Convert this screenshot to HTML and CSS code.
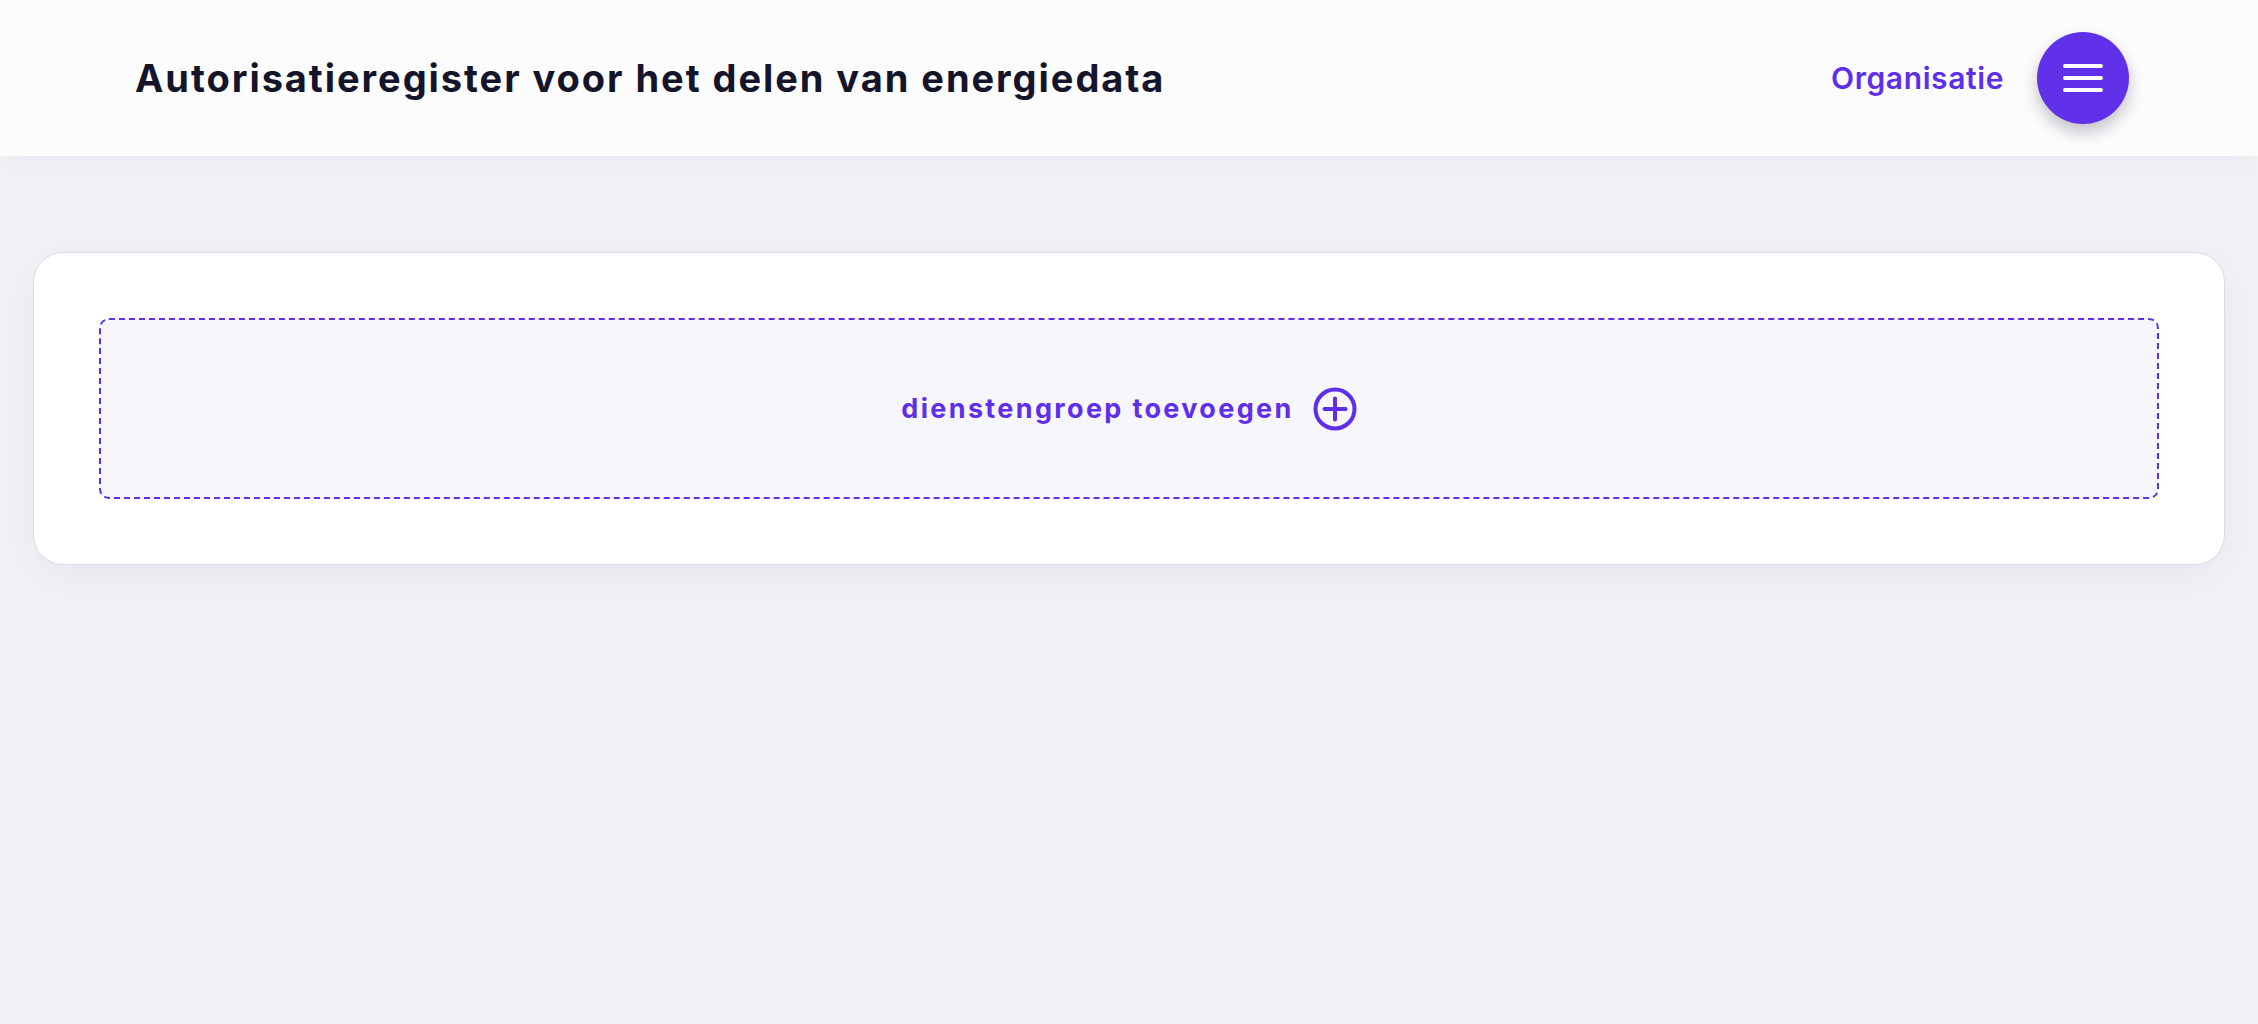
FILE: index.html
```html
<!DOCTYPE html>
<html lang="nl">
<head>
<meta charset="utf-8">
<title>Autorisatieregister</title>
<link rel="stylesheet" href="styles.css">
</head>
<body>
<header class="topbar">
  <h1 class="title">Autorisatieregister voor het delen van energiedata</h1>
  <nav class="nav">
    <a class="nav-link" href="#">Organisatie</a>
    <button class="menu-btn" type="button" aria-label="Menu">
      <span class="menu-line"></span>
      <span class="menu-line"></span>
      <span class="menu-line"></span>
    </button>
  </nav>
</header>
<main class="content">
  <section class="card">
    <button class="add-group" type="button">
      <span class="add-label">dienstengroep toevoegen</span>
      <svg class="add-icon" width="44" height="44" viewBox="0 0 44 44" aria-hidden="true">
        <circle cx="22" cy="22" r="19.5" fill="none" stroke="#5F2EEA" stroke-width="4"/>
        <path d="M22 11.5v21M11.5 22h21" stroke="#5F2EEA" stroke-width="4" stroke-linecap="round"/>
      </svg>
    </button>
  </section>
</main>
</body>
</html>
```
FILE: styles.css
```css
* { box-sizing: border-box; }
html, body { margin: 0; padding: 0; }
body {
  background: #F1F1F6;
  font-family: Inter, "Noto Sans", sans-serif;
  min-height: 1024px;
}
.topbar {
  height: 156px;
  background: #FCFCFD;
  display: flex;
  align-items: center;
  justify-content: space-between;
  padding: 0 129px 0 135px;
  box-shadow: 0 6px 30px rgba(20, 20, 43, 0.04);
  position: relative;
}
.title {
  margin: 0;
  font-size: 38px;
  font-weight: 700;
  color: #14142B;
  letter-spacing: 1.95px;
}
.nav {
  display: flex;
  align-items: center;
  gap: 33px;
}
.nav-link {
  color: #5F2EEA;
  font-size: 30px;
  font-weight: 600;
  letter-spacing: 0.6px;
  text-decoration: none;
}
.menu-btn {
  width: 92px;
  height: 92px;
  border-radius: 50%;
  border: none;
  background: #6131E9;
  display: flex;
  flex-direction: column;
  align-items: center;
  justify-content: center;
  gap: 8.5px;
  padding: 0;
  box-shadow: 0 8px 16px rgba(20, 20, 43, 0.25);
  cursor: pointer;
}
.menu-line {
  display: block;
  width: 40px;
  height: 3.5px;
  border-radius: 2px;
  background: #FFFFFF;
}
.content {
  padding: 96px 33px;
}
.card {
  background: #FFFFFF;
  border: 1px solid #DCDCE2;
  border-radius: 30px;
  padding: 65px;
  box-shadow: 0 10px 40px rgba(20, 20, 43, 0.05);
}
.add-group {
  width: 100%;
  height: 181px;
  border: 2px dashed #5F2EEA;
  border-radius: 10px;
  background: #F7F6FC;
  display: flex;
  align-items: center;
  justify-content: center;
  gap: 19px;
  font-family: inherit;
  cursor: pointer;
}
.add-label {
  color: #5F2EEA;
  font-size: 27px;
  font-weight: 700;
  letter-spacing: 2.35px;
}
.add-icon { display: block; }
```
